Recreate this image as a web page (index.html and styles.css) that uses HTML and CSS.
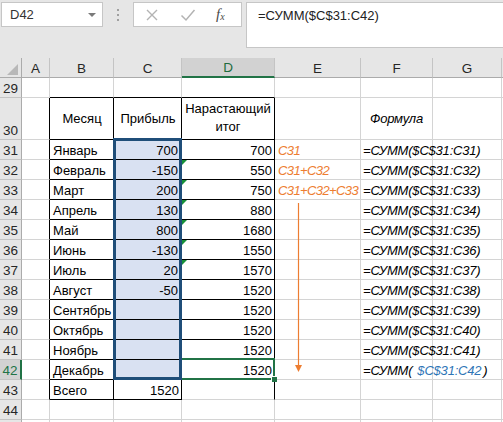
FILE: index.html
```html
<!DOCTYPE html>
<html lang="ru">
<head>
<meta charset="utf-8">
<link rel="stylesheet" href="styles.css">
</head>
<body>
<div class="bar">
  <div class="namebox"><span>D42</span><svg class="dd" width="8" height="4" viewBox="0 0 8 4"><polygon points="0,0 8,0 4,4" fill="#7a7a7a"/></svg></div>
  <div class="grip"><i></i><i></i><i></i></div>
  <div class="btns">
    <svg class="ico" width="14" height="14" viewBox="0 0 14 14"><path d="M2 2 L12 12 M12 2 L2 12" stroke="#b3b3b3" stroke-width="1.4" fill="none"/></svg>
    <svg class="ico" width="16" height="14" viewBox="0 0 16 14"><path d="M1.5 7.5 L6 12 L14.5 2" stroke="#b3b3b3" stroke-width="1.5" fill="none"/></svg>
    <span class="fx">f<sub>x</sub></span>
  </div>
  <div class="fbox">=СУММ($C$31:C42)</div>
</div>

<div class="sheet">
  <!-- header -->
  <div class="corner"><svg width="22" height="20" viewBox="0 0 22 20"><polygon points="7,17 18,17 18,6" fill="#b8b8b8"/></svg></div>
  <div class="ch">A</div><div class="ch">B</div><div class="ch">C</div><div class="ch act">D</div><div class="ch">E</div><div class="ch">F</div><div class="ch">G</div><div class="ch"></div>

  <!-- 29 -->
  <div class="rh">29</div><div class="c"></div><div class="c bb"></div><div class="c bb"></div><div class="c bb"></div><div class="c"></div><div class="c"></div><div class="c"></div><div class="c"></div>

  <!-- 30 -->
  <div class="rh">30</div><div class="c br"></div><div class="c br bb mid">Месяц</div><div class="c br bb mid">Прибыль</div><div class="c br bb mid wrap">Нарастающий итог</div><div class="c"></div><div class="c mid f">Формула</div><div class="c"></div><div class="c"></div>

  <!-- 31 -->
  <div class="rh">31</div><div class="c br"></div><div class="c br bb">Январь</div><div class="c br bb hl r">700</div><div class="c br bb r">700</div><div class="c o">C31</div><div class="c f">=СУММ($C$31:C31)</div><div class="c"></div><div class="c"></div>
  <!-- 32 -->
  <div class="rh">32</div><div class="c br"></div><div class="c br bb">Февраль</div><div class="c br bb hl r">-150</div><div class="c br bb r tri">550</div><div class="c o">C31+C32</div><div class="c f">=СУММ($C$31:C32)</div><div class="c"></div><div class="c"></div>
  <!-- 33 -->
  <div class="rh">33</div><div class="c br"></div><div class="c br bb">Март</div><div class="c br bb hl r">200</div><div class="c br bb r tri">750</div><div class="c o">C31+C32+C33</div><div class="c f">=СУММ($C$31:C33)</div><div class="c"></div><div class="c"></div>
  <!-- 34 -->
  <div class="rh">34</div><div class="c br"></div><div class="c br bb">Апрель</div><div class="c br bb hl r">130</div><div class="c br bb r tri">880</div><div class="c"></div><div class="c f">=СУММ($C$31:C34)</div><div class="c"></div><div class="c"></div>
  <!-- 35 -->
  <div class="rh">35</div><div class="c br"></div><div class="c br bb">Май</div><div class="c br bb hl r">800</div><div class="c br bb r tri">1680</div><div class="c"></div><div class="c f">=СУММ($C$31:C35)</div><div class="c"></div><div class="c"></div>
  <!-- 36 -->
  <div class="rh">36</div><div class="c br"></div><div class="c br bb">Июнь</div><div class="c br bb hl r">-130</div><div class="c br bb r tri">1550</div><div class="c"></div><div class="c f">=СУММ($C$31:C36)</div><div class="c"></div><div class="c"></div>
  <!-- 37 -->
  <div class="rh">37</div><div class="c br"></div><div class="c br bb">Июль</div><div class="c br bb hl r">20</div><div class="c br bb r tri">1570</div><div class="c"></div><div class="c f">=СУММ($C$31:C37)</div><div class="c"></div><div class="c"></div>
  <!-- 38 -->
  <div class="rh">38</div><div class="c br"></div><div class="c br bb">Август</div><div class="c br bb hl r">-50</div><div class="c br bb r">1520</div><div class="c"></div><div class="c f">=СУММ($C$31:C38)</div><div class="c"></div><div class="c"></div>
  <!-- 39 -->
  <div class="rh">39</div><div class="c br"></div><div class="c br bb">Сентябрь</div><div class="c br bb hl r"></div><div class="c br bb r">1520</div><div class="c"></div><div class="c f">=СУММ($C$31:C39)</div><div class="c"></div><div class="c"></div>
  <!-- 40 -->
  <div class="rh">40</div><div class="c br"></div><div class="c br bb">Октябрь</div><div class="c br bb hl r"></div><div class="c br bb r">1520</div><div class="c"></div><div class="c f">=СУММ($C$31:C40)</div><div class="c"></div><div class="c"></div>
  <!-- 41 -->
  <div class="rh">41</div><div class="c br"></div><div class="c br bb">Ноябрь</div><div class="c br bb hl r"></div><div class="c br bb r">1520</div><div class="c"></div><div class="c f">=СУММ($C$31:C41)</div><div class="c"></div><div class="c"></div>
  <!-- 42 -->
  <div class="rh act">42</div><div class="c br"></div><div class="c br bb">Декабрь</div><div class="c br bb hl r"></div><div class="c br bb r">1520</div><div class="c"></div><div class="c f">=СУММ(<span class="ref">$C$31:C42</span>)</div><div class="c"></div><div class="c"></div>
  <!-- 43 -->
  <div class="rh">43</div><div class="c br"></div><div class="c br bb">Всего</div><div class="c br bb r">1520</div><div class="c br"></div><div class="c"></div><div class="c"></div><div class="c"></div><div class="c"></div>
  <!-- 44 -->
  <div class="rh">44</div><div class="c"></div><div class="c"></div><div class="c"></div><div class="c"></div><div class="c"></div><div class="c"></div><div class="c"></div><div class="c"></div>
  <!-- 45 (only its top edge is in view) -->
  <div class="rh"></div><div class="c"></div><div class="c"></div><div class="c"></div><div class="c"></div><div class="c"></div><div class="c"></div><div class="c"></div><div class="c"></div>

  <!-- overlays -->
  <div class="selgreen"><span class="handle"></span></div>
  <div class="refbox"></div>
  <svg class="arrow" width="10" height="172" viewBox="0 0 10 172"><line x1="4.5" y1="0" x2="4.5" y2="163" stroke="#ed7d31" stroke-width="1.2"/><polygon points="1,162 8,162 4.5,169" fill="#ed7d31"/></svg>
</div>
</body>
</html>
```

FILE: styles.css
```css
html, body {
  margin: 0;
  padding: 0;
  background: #e6e6e6;
  overflow: hidden;
  width: 503px;
  height: 422px;
}

body {
  font-family: "Liberation Sans", Arial, sans-serif;
  font-size: 13px;
  color: #000;
}

/* ---------- formula bar ---------- */
.bar {
  display: flex;
  align-items: flex-start;
  height: 58px;
  padding-top: 2px;
  box-sizing: border-box;
  background: #e6e6e6;
}

.namebox {
  margin-left: 1px;
  width: 102px;
  height: 25px;
  box-sizing: border-box;
  border: 1px solid #c6c6c6;
  background: #fff;
  display: flex;
  align-items: center;
  justify-content: space-between;
  padding: 0 6px 1px 8px;
  color: #333;
  font-size: 13px;
}

.namebox .dd {
  margin-top: 1px;
}

.grip {
  width: 30px;
  height: 25px;
  display: flex;
  flex-direction: column;
  align-items: center;
  justify-content: center;
  gap: 3px;
}

.grip i {
  display: block;
  width: 2px;
  height: 2px;
  background: #a0a0a0;
}

.btns {
  width: 109px;
  height: 25px;
  box-sizing: border-box;
  border: 1px solid #c6c6c6;
  background: #fff;
  display: flex;
  align-items: center;
  padding-left: 11px;
  gap: 21px;
}

.fx {
  font-family: "Liberation Serif", "Times New Roman", serif;
  font-style: italic;
  font-size: 15px;
  color: #4a4a4a;
  margin-left: -1px;
}

.fx sub {
  font-size: 10px;
  vertical-align: 0;
  position: relative;
  top: 1px;
}

.fbox {
  margin-left: 4px;
  flex: 1;
  height: 46px;
  box-sizing: border-box;
  border: 1px solid #c6c6c6;
  border-right: none;
  background: #fff;
  padding: 5px 0 0 11px;
  line-height: 16px;
  color: #222;
}

/* ---------- sheet grid ---------- */
.sheet {
  position: relative;
  display: grid;
  grid-template-columns: 22px 28px 64px 68px 93px 86px 72px 69px 1fr;
  grid-template-rows: 20px 20px 42px repeat(15, 20px);
  background: #fff;
}

.corner {
  background: #e6e6e6;
  border-right: 1px solid #ababab;
  border-bottom: 1px solid #ababab;
  box-sizing: border-box;
  overflow: hidden;
}

.corner svg {
  display: block;
}

.ch {
  background: #e6e6e6;
  border-bottom: 1px solid #ababab;
  border-right: 1px solid #c4c4c4;
  box-sizing: border-box;
  display: flex;
  align-items: center;
  justify-content: center;
  color: #262626;
  padding-top: 1px;
  font-size: 13.5px;
}

.ch.act {
  background: #d2d2d2;
  color: #1d6b3e;
  border-bottom: 2px solid #217346;
}

.rh {
  background: #e6e6e6;
  border-right: 1px solid #ababab;
  border-bottom: 1px solid #c4c4c4;
  box-sizing: border-box;
  display: flex;
  align-items: flex-end;
  justify-content: center;
  color: #262626;
  line-height: 15px;
  padding-bottom: 1px;
  font-size: 13.5px;
}

.rh.act {
  background: #d2d2d2;
  color: #217346;
  border-right: 2px solid #217346;
}

.c {
  position: relative;
  border-right: 1px solid #d4d4d4;
  border-bottom: 1px solid #d4d4d4;
  box-sizing: border-box;
  display: flex;
  align-items: flex-end;
  padding: 0 2px 1px 3px;
  line-height: 15px;
  white-space: nowrap;
  overflow: visible;
}

.c.br {
  border-right-color: #000;
}

.c.bb {
  border-bottom-color: #000;
}

.c.r {
  justify-content: flex-end;
}

.c.mid {
  align-items: center;
  justify-content: center;
  text-align: center;
}

.c.wrap {
  white-space: normal;
  line-height: 18px;
  padding: 0 1px 1px 1px;
}

.c.hl {
  background: #d9e1f2;
  padding-right: 3px;
}

.c.f {
  font-style: italic;
  padding-left: 2px;
  letter-spacing: -0.2px;
}

.c.o {
  font-style: italic;
  color: #ed7d31;
  letter-spacing: -0.6px;
}

.ref {
  color: #2e75b6;
  margin-left: 5px;
  margin-right: 2px;
}

.c.tri::before {
  content: "";
  position: absolute;
  left: 0;
  top: 0;
  width: 0;
  height: 0;
  border-top: 5px solid #17903a;
  border-right: 5px solid transparent;
}

/* ---------- overlays ---------- */
.selgreen {
  position: absolute;
  left: 180px;
  top: 300px;
  width: 95px;
  height: 22px;
  box-sizing: border-box;
  border: 2px solid #217346;
}

.handle {
  position: absolute;
  right: -4px;
  bottom: -4px;
  width: 5px;
  height: 5px;
  background: #217346;
  border-left: 1px solid #fff;
  border-top: 1px solid #fff;
}

.refbox {
  position: absolute;
  left: 113px;
  top: 80px;
  width: 69px;
  height: 242px;
  box-sizing: border-box;
  border: 3px solid #1f4e79;
}

.arrow {
  position: absolute;
  left: 294px;
  top: 145px;
}
```
